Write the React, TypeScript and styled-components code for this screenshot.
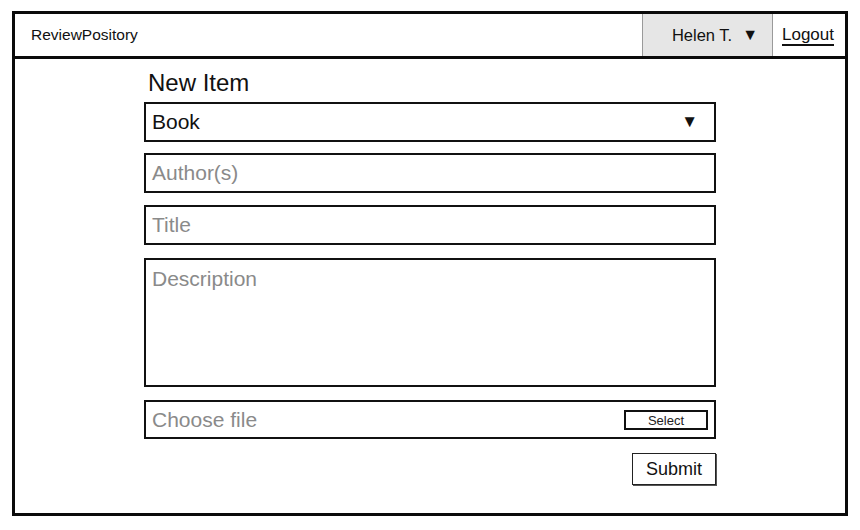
import React from "react";
import styled, { createGlobalStyle } from "styled-components";

const GlobalStyle = createGlobalStyle`
  html, body {
    margin: 0;
    padding: 0;
    background: #ffffff;
    font-family: "Liberation Sans", Arial, sans-serif;
    color: #111;
  }
`;

const Frame = styled.div`
  box-sizing: border-box;
  margin: 11px 0 0 12px;
  width: 836px;
  height: 505px;
  border: 3px solid #0a0a0a;
  display: flex;
  flex-direction: column;
`;

const Header = styled.header`
  box-sizing: border-box;
  height: 45px;
  border-bottom: 3px solid #0a0a0a;
  display: flex;
  align-items: stretch;
`;

const Brand = styled.div`
  flex: 1;
  display: flex;
  align-items: center;
  padding-left: 16px;
  font-size: 15.5px;
`;

const UserMenu = styled.div`
  box-sizing: border-box;
  width: 131px;
  background: #e6e6e6;
  border-left: 1px solid #9a9a9a;
  border-right: 1px solid #9a9a9a;
  display: flex;
  align-items: center;
  justify-content: flex-end;
  padding-right: 14px;
  gap: 10px;
  font-size: 16.5px;
`;

const Caret = styled.span`
  font-size: 16px;
`;

const LogoutLink = styled.a`
  box-sizing: border-box;
  width: 72px;
  display: flex;
  align-items: center;
  padding: 0 0 0 9px;
  font-size: 17px;
  color: #111;
  text-decoration: underline;
  text-underline-offset: 4px;
  text-decoration-thickness: 2px;
`;

const Content = styled.main`
  padding: 10px 0 0 129px;
`;

const Form = styled.form`
  width: 572px;
  display: flex;
  flex-direction: column;
`;

const Heading = styled.h1`
  margin: 0 0 5px 4px;
  font-size: 24px;
  font-weight: normal;
  line-height: 28px;
`;

const Field = styled.div<{ $height?: number; $gap?: number; $top?: boolean }>`
  box-sizing: border-box;
  height: ${(p) => p.$height ?? 40}px;
  margin-bottom: ${(p) => p.$gap ?? 12}px;
  border: 2px solid #111;
  display: flex;
  align-items: ${(p) => (p.$top ? "flex-start" : "center")};
  padding: ${(p) => (p.$top ? "7px 6px" : "0 6px")};
  font-size: 21px;
`;

const Value = styled.span`
  flex: 1;
  color: #111;
`;

const Placeholder = styled.span`
  flex: 1;
  color: #8a8a8a;
`;

const SelectCaret = styled.span`
  font-size: 17px;
  margin-right: 10px;
`;

const SmallButton = styled.span`
  box-sizing: border-box;
  width: 84px;
  height: 20px;
  border: 2px solid #111;
  font-size: 13px;
  display: flex;
  align-items: flex-end;
  justify-content: center;
  line-height: 14px;
  color: #222;
`;

const Actions = styled.div`
  display: flex;
  justify-content: flex-end;
`;

const SubmitButton = styled.button`
  box-sizing: border-box;
  width: 84px;
  height: 32px;
  background: #fff;
  border: 1px solid #222;
  box-shadow: 1px 1px 0 #555;
  font-family: "Liberation Sans", Arial, sans-serif;
  font-size: 18px;
  color: #111;
  padding: 0;
`;

export default function App() {
  return (
    <>
      <GlobalStyle />
      <Frame>
        <Header>
          <Brand>ReviewPository</Brand>
          <UserMenu>
            <span>Helen T.</span>
            <Caret>▼</Caret>
          </UserMenu>
          <LogoutLink>Logout</LogoutLink>
        </Header>
        <Content>
          <Form>
            <Heading>New Item</Heading>
            <Field $gap={11}>
              <Value>Book</Value>
              <SelectCaret>▼</SelectCaret>
            </Field>
            <Field $gap={12}>
              <Placeholder>Author(s)</Placeholder>
            </Field>
            <Field $gap={13}>
              <Placeholder>Title</Placeholder>
            </Field>
            <Field $height={129} $gap={13} $top>
              <Placeholder>Description</Placeholder>
            </Field>
            <Field $height={39} $gap={14}>
              <Placeholder>Choose file</Placeholder>
              <SmallButton>Select</SmallButton>
            </Field>
            <Actions>
              <SubmitButton type="button">Submit</SubmitButton>
            </Actions>
          </Form>
        </Content>
      </Frame>
    </>
  );
}
